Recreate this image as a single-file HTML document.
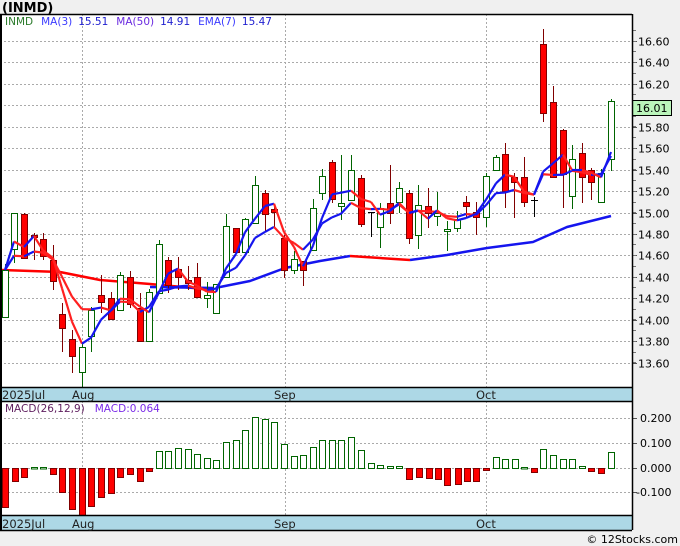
<!DOCTYPE html>
<html><head><meta charset="utf-8"><style>
html,body{margin:0;padding:0;background:#f0f0f0;}
body{width:680px;height:546px;overflow:hidden;font-family:"DejaVu Sans","Liberation Sans",sans-serif;}
</style></head><body>
<svg id="s" width="680" height="546" xmlns="http://www.w3.org/2000/svg" style="display:block">
<rect x="0" y="0" width="680" height="546" fill="#f0f0f0"/>
<rect x="0" y="14" width="632" height="516" fill="#fff"/>
<text x="2" y="12" font-size="13" font-weight="bold" fill="#000">(INMD)</text>
<g id="g"></g>
</svg>
<script>
var g=document.getElementById('g'),h='';
function L(x1,y1,x2,y2,c,w,d){h+='<line x1="'+x1+'" y1="'+y1+'" x2="'+x2+'" y2="'+y2+'" stroke="'+c+'" stroke-width="'+(w||1)+'"'+(d?' stroke-dasharray="'+d+'"':'')+'/>';}
function T(x,y,t,c,s,a){h+='<text x="'+x+'" y="'+y+'" font-size="'+(s||11)+'" fill="'+c+'"'+(a?' text-anchor="'+a+'"':'')+'>'+t+'</text>';}
// grid
var labs=['16.60','16.40','16.20','16.00','15.80','15.60','15.40','15.20','15.00','14.80','14.60','14.40','14.20','14.00','13.80','13.60'];
for(var k=0;k<16;k++){var y=Math.round(41+k*21.44)+.5;L(0,y,632,y,'#aaa',1,'2,2');L(632,y,637,y,'#555');if(k!=3)T(638,y+4,labs[k],'#000',11);}
for(var k=0;k<32;k++){var y=Math.round(30+k*10.72)+.5;if(y<387)L(632,y,636,y,'#777');}
[82.5,285.5,486.5].forEach(function(x){L(x,14,x,387,'#aaa',1,'2,2');L(x,401,x,515,'#aaa',1,'2,2');});
[[418,'0.200'],[443,'0.100'],[468,'0.000'],[492,'-0.100']].forEach(function(a){L(0,a[0]+.5,632,a[0]+.5,'#aaa',1,'2,2');L(632,a[0]+.5,637,a[0]+.5,'#555');T(a[1][0]=='-'?636:640,a[0]+4,a[1],'#000',11);});
// candles [x,open,close,high,low]
var C=[[5,317,270,264,317],[14,249,213,213,263],[24,214,258,213,258],[34,235,237,233,260],[43,239,256,233,260],[53,260,281,245,290],[62,314,328,303,352],[72,339,356,330,373],[82,372,347,343,387],[91,336,310,307,352],[101,295,302,275,313],[111,298,319,292,320],[120,310,275,272,310],[130,277,304,271,308],[140,308,341,293,341],[149,341,292,289,341],[159,293,244,240,293],[168,260,285,257,293],[178,269,277,257,290],[188,280,283,266,290],[197,277,297,263,298],[207,298,295,282,308],[216,313,284,284,313],[226,277,226,214,277],[236,228,252,228,252],[245,252,219,218,252],[255,223,185,176,223],[265,193,214,190,232],[274,209,212,204,227],[284,238,270,235,278],[294,270,259,251,274],[303,261,270,261,286],[313,250,208,199,250],[322,193,176,169,200],[332,162,199,160,203],[341,206,203,155,220],[351,200,170,155,200],[361,178,224,175,227],[371,212,212,212,237,1],[380,227,208,203,248],[390,203,213,165,224],[399,202,188,182,213],[409,193,238,190,244],[418,235,205,185,249],[428,206,213,188,228],[437,216,213,192,226],[447,231,229,221,251],[457,228,219,211,232],[466,202,206,196,217],[476,212,217,202,235],[486,217,176,173,227],[496,170,157,155,170],[505,154,191,143,208],[514,177,182,173,218],[524,177,202,157,207],[534,200,200,197,217,1],[543,44,113,29,122],[553,102,177,86,178],[563,130,174,129,208],[572,196,159,145,209],[582,153,177,143,203],[591,170,182,168,200],[601,202,173,169,202],[611,159,101,99,171]];
var cl=C.map(function(c){return c[2];});
// MA50 lines
function P(pts,c,w){h+='<polyline points="'+pts+'" fill="none" stroke="'+c+'" stroke-width="'+w+'" stroke-linejoin="round"/>';}
P('2,270 60,272 100,280 150,284 215,290','#f00',2.5);
P('150,287 215,288 250,281 285,268 320,261 350,256','#1515ee',2.5);
P('350,256 410,260','#f00',2.5);
P('410,260 447,255 487,248 533,242 567,227 611,216','#1515ee',2.5);
// candles
C.forEach(function(c){var x=c[0],o=c[1],cc=c[2],hi=c[3],lo=c[4];
 if(c[5]){L(x+.5,hi,x+.5,lo,'#000');L(x-3,o+.5,x+4,o+.5,'#000');return;}
 var up=cc<o, col=up?'#006400':'#800000';
 L(x+.5,hi,x+.5,lo,col);
 var t=Math.min(o,cc),b=Math.max(o,cc);if(b-t<2)b=t+2;
 h+='<rect x="'+(x-2.5)+'" y="'+(t+.5)+'" width="6" height="'+(b-t)+'" fill="'+(up?'#fff':'#f00')+'" stroke="'+col+'"/>';});
// MA3, EMA7
function seg(arr){for(var i=1;i<arr.length;i++){var c=arr[i]>arr[i-1]?'#ff2020':'#1515ee';L(C[i-1][0],arr[i-1],C[i][0],arr[i],c,2.2);}}
var ma=[],em=[],e=cl[0];
for(var i=0;i<cl.length;i++){var a=cl.slice(Math.max(0,i-2),i+1);ma.push(a.reduce(function(p,q){return p+q;},0)/a.length);e=i?e+(cl[i]-e)*0.25:cl[0];em.push(e);}
seg(em);seg(ma);
// legend
h+='<text x="5" y="25" font-size="10.5"><tspan fill="#2a7a2a">INMD</tspan><tspan dx="8" fill="#3a3aff">MA(3)</tspan><tspan dx="6" fill="#2020d0">15.51</tspan><tspan dx="8" fill="#6a2ae0">MA(50)</tspan><tspan dx="6" fill="#2020d0">14.91</tspan><tspan dx="8" fill="#3a3aff">EMA(7)</tspan><tspan dx="6" fill="#2020d0">15.47</tspan></text>';
// price box
h+='<rect x="632.5" y="100.5" width="39" height="15" fill="#bbf5bb" stroke="#000"/>';T(636,112,'16.01','#000',11);
// MACD
var M=[[5,507],[15,481],[24,477],[34,467],[43,467],[53,474],[62,492],[72,509],[82,515],[91,506],[101,497],[111,493],[120,477],[130,474],[140,481],[149,471],[159,451],[168,451],[178,448],[188,449],[197,454],[207,458],[216,460],[226,442],[236,440],[245,430],[255,417],[265,419],[274,422],[284,444],[294,456],[303,455],[313,447],[322,440],[332,440],[341,440],[351,437],[361,450],[371,463],[380,465],[390,466],[399,466],[409,479],[419,477],[429,478],[438,479],[447,485],[458,484],[467,481],[476,481],[486,470],[496,457],[505,459],[515,459],[524,467],[534,472],[543,449],[553,455],[563,459],[572,459],[582,466],[591,471],[601,473],[611,452]];
M.forEach(function(m){var x=m[0],y=m[1],up=y<468,t=Math.min(y,468),b=Math.max(y,468);if(b-t<1.5)b=t+1.5;
 h+='<rect x="'+(x-2.5)+'" y="'+(t+.5)+'" width="6" height="'+(b-t)+'" fill="'+(up?'#fff':'#f00')+'" stroke="'+(up?'#006400':'#800000')+'"/>';});
h+='<text x="5" y="412" font-size="10.5"><tspan fill="#602060">MACD(26,12,9)</tspan><tspan dx="10" fill="#7a2ae8">MACD:0.064</tspan></text>';
// axis bands
[[387,401],[515,530]].forEach(function(b){h+='<rect x="0" y="'+b[0]+'" width="632" height="'+(b[1]-b[0])+'" fill="#add8e6"/>';L(0,b[0]+.5,632,b[0]+.5,'#000',1.5);L(0,b[1]+.5,632,b[1]+.5,'#000',1.5);
 var y=b[1]-2;T(2,y,'2025Jul','#222',11.5);T(72,y,'Aug','#222',11.5);T(274,y,'Sep','#222',11.5);T(476,y,'Oct','#222',11.5);});
L(632.5,14,632.5,530,'#000',1.5);L(0,14.5,632,14.5,'#000',1.5);L(1,14,1,530,'#000',2);
T(678,543,'© 12Stocks.com','#000',11,'end');
g.innerHTML=h;
</script>
</body></html>
